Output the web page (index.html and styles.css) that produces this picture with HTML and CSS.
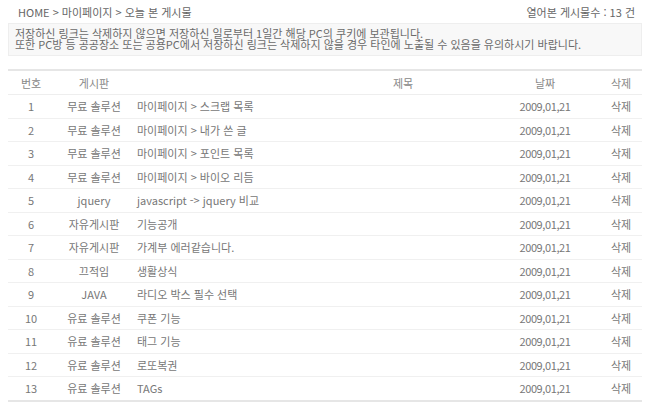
FILE: index.html
```html
<!DOCTYPE html>
<html lang="ko">
<head>
  <meta charset="UTF-8">
  <title>오늘 본 게시물</title>
  <link rel="stylesheet" href="styles.css">
</head>
<body>

  <div class="top-bar">
    <div class="breadcrumb">HOME &gt; 마이페이지 &gt; 오늘 본 게시물</div>
    <div class="count">열어본 게시물수 : 13 건</div>
  </div>

  <div class="notice">
    <p>저장하신 링크는 삭제하지 않으면 저장하신 일로부터 1일간 해당 PC의 쿠키에 보관됩니다.</p>
    <p>또한 PC방 등 공공장소 또는 공용PC에서 저장하신 링크는 삭제하지 않을 경우 타인에 노출될 수 있음을 유의하시기 바랍니다.</p>
  </div>

  <table class="list">
    <thead>
      <tr>
        <th class="col-no">번호</th>
        <th class="col-board">게시판</th>
        <th class="col-title">제목</th>
        <th class="col-date">날짜</th>
        <th class="col-del">삭제</th>
      </tr>
    </thead>
    <tbody>
      <tr><td class="col-no">1</td><td class="col-board">무료 솔루션</td><td class="col-title">마이페이지 &gt; 스크랩 목록</td><td class="col-date">2009,01,21</td><td class="col-del">삭제</td></tr>
      <tr><td class="col-no">2</td><td class="col-board">무료 솔루션</td><td class="col-title">마이페이지 &gt; 내가 쓴 글</td><td class="col-date">2009,01,21</td><td class="col-del">삭제</td></tr>
      <tr><td class="col-no">3</td><td class="col-board">무료 솔루션</td><td class="col-title">마이페이지 &gt; 포인트 목록</td><td class="col-date">2009,01,21</td><td class="col-del">삭제</td></tr>
      <tr><td class="col-no">4</td><td class="col-board">무료 솔루션</td><td class="col-title">마이페이지 &gt; 바이오 리듬</td><td class="col-date">2009,01,21</td><td class="col-del">삭제</td></tr>
      <tr><td class="col-no">5</td><td class="col-board">jquery</td><td class="col-title">javascript -&gt; jquery 비교</td><td class="col-date">2009,01,21</td><td class="col-del">삭제</td></tr>
      <tr><td class="col-no">6</td><td class="col-board">자유게시판</td><td class="col-title">기능공개</td><td class="col-date">2009,01,21</td><td class="col-del">삭제</td></tr>
      <tr><td class="col-no">7</td><td class="col-board">자유게시판</td><td class="col-title">가계부 에러같습니다.</td><td class="col-date">2009,01,21</td><td class="col-del">삭제</td></tr>
      <tr><td class="col-no">8</td><td class="col-board">끄적임</td><td class="col-title">생활상식</td><td class="col-date">2009,01,21</td><td class="col-del">삭제</td></tr>
      <tr><td class="col-no">9</td><td class="col-board">JAVA</td><td class="col-title">라디오 박스 필수 선택</td><td class="col-date">2009,01,21</td><td class="col-del">삭제</td></tr>
      <tr><td class="col-no">10</td><td class="col-board">유료 솔루션</td><td class="col-title">쿠폰 기능</td><td class="col-date">2009,01,21</td><td class="col-del">삭제</td></tr>
      <tr><td class="col-no">11</td><td class="col-board">유료 솔루션</td><td class="col-title">태그 기능</td><td class="col-date">2009,01,21</td><td class="col-del">삭제</td></tr>
      <tr><td class="col-no">12</td><td class="col-board">유료 솔루션</td><td class="col-title">로또복권</td><td class="col-date">2009,01,21</td><td class="col-del">삭제</td></tr>
      <tr><td class="col-no">13</td><td class="col-board">유료 솔루션</td><td class="col-title">TAGs</td><td class="col-date">2009,01,21</td><td class="col-del">삭제</td></tr>
    </tbody>
  </table>

</body>
</html>
```

FILE: styles.css
```css
body {
  margin: 0;
  padding: 0 8px;
  background: #fff;
  font-family: "Noto Sans CJK KR", "DejaVu Sans", sans-serif;
  font-size: 11px;
  color: #777;
}

.top-bar {
  display: flex;
  justify-content: space-between;
  align-items: center;
  height: 23px;
  padding: 0 7px 0 10px;
  color: #666;
}

.notice {
  height: 27px;
  padding: 4px 6px 0;
  border: 1px solid #eee;
  background: #f8f8f8;
  color: #6a6a6a;
}

.notice p {
  margin: 0;
  height: 10.5px;
  line-height: 10.5px;
}

.list {
  width: 100%;
  margin-top: 13px;
  border-collapse: collapse;
  table-layout: fixed;
  border-top: 2px solid #e6e6e6;
  border-bottom: 2px solid #e6e6e6;
}

.list th,
.list td {
  padding: 0;
  font-weight: normal;
  white-space: nowrap;
}

.list th {
  height: 23px;
  border-bottom: 1px solid #eee;
  color: #888;
}

.list td {
  height: 22.5px;
  border-bottom: 1px solid #f0f0f0;
}

.col-no { width: 46px; text-align: center; }
.col-board { width: 80px; text-align: center; }
.col-title { text-align: left; padding-left: 3px !important; }
.col-date { width: 110px; text-align: center; letter-spacing: -0.4px; }
.col-del { width: 42px; text-align: center; }

th.col-title {
  padding-left: 259px !important;
}

th.col-date {
  letter-spacing: 0;
}
```
